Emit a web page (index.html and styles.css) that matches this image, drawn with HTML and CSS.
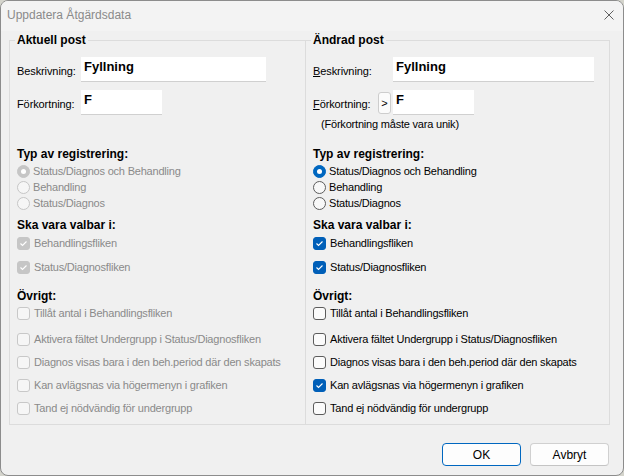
FILE: index.html
```html
<!DOCTYPE html>
<html lang="sv">
<head>
<meta charset="utf-8">
<title>Uppdatera Åtgärdsdata</title>
<link rel="stylesheet" href="styles.css">
</head>
<body>
<div class="window">
  <div class="titlebar">
    <span class="title">Uppdatera Åtgärdsdata</span>
    <span class="close"><svg width="10" height="10" viewBox="0 0 10 10"><path d="M0.5 0.5 L9.5 9.5 M9.5 0.5 L0.5 9.5" stroke="#5f5f5f" stroke-width="1" fill="none"/></svg></span>
  </div>
  <div class="content">
    <div class="groups">
      <fieldset class="group left">
        <legend>Aktuell post</legend>
        <div class="field f1"><span class="lbl lw-left">Beskrivning:</span><div class="input in-wide-left">Fyllning</div></div>
        <div class="field f2"><span class="lbl lw-left">Förkortning:</span><div class="input in-short">F</div></div>
        <div class="note"></div>
        <div class="heading hd1">Typ av registrering:</div>
        <div class="opt disabled o-first"><span class="radio checked"></span><span>Status/Diagnos och Behandling</span></div>
        <div class="opt disabled"><span class="radio"></span><span>Behandling</span></div>
        <div class="opt disabled"><span class="radio"></span><span>Status/Diagnos</span></div>
        <div class="heading hd2">Ska vara valbar i:</div>
        <div class="opt disabled c1"><span class="check checked"><svg viewBox="0 0 13 13"><path d="M3.5 6.5 L5.5 8.5 L9.5 4.5"/></svg></span><span>Behandlingsfliken</span></div>
        <div class="opt disabled c2"><span class="check checked"><svg viewBox="0 0 13 13"><path d="M3.5 6.5 L5.5 8.5 L9.5 4.5"/></svg></span><span>Status/Diagnosfliken</span></div>
        <div class="heading hd3">Övrigt:</div>
        <div class="opt disabled c3"><span class="check"></span><span>Tillåt antal i Behandlingsfliken</span></div>
        <div class="opt disabled c4"><span class="check"></span><span>Aktivera fältet Undergrupp i Status/Diagnosfliken</span></div>
        <div class="opt disabled c5"><span class="check"></span><span>Diagnos visas bara i den beh.period där den skapats</span></div>
        <div class="opt disabled c5"><span class="check"></span><span>Kan avlägsnas via högermenyn i grafiken</span></div>
        <div class="opt disabled c5"><span class="check"></span><span>Tand ej nödvändig för undergrupp</span></div>
      </fieldset>
      <fieldset class="group right">
        <legend>Ändrad post</legend>
        <div class="field f1"><span class="lbl lw-right1"><u>B</u>eskrivning:</span><div class="input in-wide-right">Fyllning</div></div>
        <div class="field f2"><span class="lbl lw-right2"><u>F</u>örkortning:</span><span class="mini-btn">&gt;</span><div class="input in-short">F</div></div>
        <div class="note">(Förkortning måste vara unik)</div>
        <div class="heading hd1">Typ av registrering:</div>
        <div class="opt o-first"><span class="radio checked"></span><span>Status/Diagnos och Behandling</span></div>
        <div class="opt"><span class="radio"></span><span>Behandling</span></div>
        <div class="opt"><span class="radio"></span><span>Status/Diagnos</span></div>
        <div class="heading hd2">Ska vara valbar i:</div>
        <div class="opt c1"><span class="check checked"><svg viewBox="0 0 13 13"><path d="M3.5 6.5 L5.5 8.5 L9.5 4.5"/></svg></span><span>Behandlingsfliken</span></div>
        <div class="opt c2"><span class="check checked"><svg viewBox="0 0 13 13"><path d="M3.5 6.5 L5.5 8.5 L9.5 4.5"/></svg></span><span>Status/Diagnosfliken</span></div>
        <div class="heading hd3">Övrigt:</div>
        <div class="opt c3"><span class="check"></span><span>Tillåt antal i Behandlingsfliken</span></div>
        <div class="opt c4"><span class="check"></span><span>Aktivera fältet Undergrupp i Status/Diagnosfliken</span></div>
        <div class="opt c5"><span class="check"></span><span>Diagnos visas bara i den beh.period där den skapats</span></div>
        <div class="opt c5"><span class="check checked"><svg viewBox="0 0 13 13"><path d="M3.5 6.5 L5.5 8.5 L9.5 4.5"/></svg></span><span>Kan avlägsnas via högermenyn i grafiken</span></div>
        <div class="opt c5"><span class="check"></span><span>Tand ej nödvändig för undergrupp</span></div>
      </fieldset>
    </div>
    <div class="buttons">
      <div class="btn default">OK</div>
      <div class="btn">Avbryt</div>
    </div>
  </div>
</div>
</body>
</html>
```

FILE: styles.css
```css
html, body {
  margin: 0;
  padding: 0;
  background: #d4d4cc;
}
body {
  font-family: "Liberation Sans", Arial, sans-serif;
  font-size: 11px;
  color: #000;
}
.window {
  width: 624px;
  height: 476px;
  box-sizing: border-box;
  border: 1px solid #8c8c8c;
  border-radius: 8px;
  background: #f0f0f0;
  overflow: hidden;
  display: flex;
  flex-direction: column;
}
.titlebar {
  height: 30px;
  flex: none;
  display: flex;
  align-items: center;
  justify-content: space-between;
  padding: 0 9px 0 6px;
  background: #f3f3f3;
}
.title {
  font-size: 12px;
  color: #8a8a8a;
  margin-top: -2px;
}
.close {
  display: flex;
  width: 10px;
  height: 10px;
  margin-top: -3px;
}
.content {
  flex: 1;
  display: flex;
  flex-direction: column;
  padding: 2px 13px 0 8px;
}
.groups {
  display: flex;
}
.group {
  margin: 0;
  border: 1px solid #dcdcdc;
  padding: 0 7px;
  height: 392px;
  box-sizing: border-box;
  min-width: 0;
}
.group.left {
  width: 297px;
}
.group.right {
  width: 305px;
  margin-left: -1px;
}
legend {
  padding: 0 2px;
  margin-left: -2px;
  font-weight: bold;
  font-size: 12px;
  line-height: 14px;
}
.field {
  display: flex;
  align-items: center;
  height: 25px;
}
.f1 { margin-top: 10px; }
.f2 { margin-top: 8px; }
.lbl {
  flex: none;
  padding-top: 3px;
  line-height: 16px;
  letter-spacing: -0.1px;
}
.lbl u { text-decoration: underline; }
.lw-left { width: 64px; }
.lw-right1 { width: 80px; }
.lw-right2 { width: 65px; }
.input {
  flex: none;
  height: 25px;
  box-sizing: border-box;
  background: #fff;
  border-bottom: 1px solid #d0d0d0;
  font-weight: bold;
  font-size: 13px;
  line-height: 16px;
  padding: 2px 3px;
}
.in-wide-left { width: 185px; }
.in-wide-right { width: 201px; }
.in-short { width: 81px; }
.mini-btn {
  flex: none;
  width: 13px;
  height: 22px;
  box-sizing: border-box;
  border: 1px solid #cdcdcd;
  border-radius: 3px;
  background: #fbfbfb;
  margin-right: 2px;
  display: flex;
  align-items: center;
  justify-content: center;
  font-size: 11px;
}
.note {
  height: 16px;
  line-height: 16px;
  margin-top: 1px;
  padding-left: 8px;
  letter-spacing: -0.2px;
}
.heading {
  font-weight: bold;
  font-size: 12px;
  line-height: 16px;
  height: 16px;
}
.hd1 { margin-top: 14px; }
.hd2 { margin-top: 6px; }
.hd3 { margin-top: 13px; }
.opt {
  display: flex;
  align-items: center;
  height: 16px;
  line-height: 16px;
  letter-spacing: -0.2px;
}
.o-first { margin-top: 1px; }
.c1 { margin-top: 2px; }
.c2 { margin-top: 8px; }
.c3 { margin-top: 1px; }
.c4 { margin-top: 10px; }
.c5 { margin-top: 7px; }
.opt.disabled { color: #8a8a8a; }

.radio {
  flex: none;
  width: 13px;
  height: 13px;
  box-sizing: border-box;
  border-radius: 50%;
  border: 1px solid #5c5c5c;
  background: #f8f8f8;
  margin-right: 3px;
  display: flex;
  align-items: center;
  justify-content: center;
}
.radio.checked {
  background: #0067c0;
  border-color: #0067c0;
}
.radio.checked::after {
  content: "";
  width: 5px;
  height: 5px;
  border-radius: 50%;
  background: #fff;
}
.disabled .radio {
  border-color: #c6c6c6;
  background: #f6f6f6;
}
.disabled .radio.checked {
  background: #c6c6c6;
  border-color: #c6c6c6;
}

.check {
  flex: none;
  width: 13px;
  height: 13px;
  box-sizing: border-box;
  border-radius: 3px;
  border: 1px solid #5c5c5c;
  background: #fbfbfb;
  margin-right: 4px;
  display: flex;
}
.check.checked {
  background: #005fb8;
  border-color: #005fb8;
}
.check svg {
  width: 13px;
  height: 13px;
  margin: -1px;
}
.check svg path {
  fill: none;
  stroke: #fff;
  stroke-width: 1.1;
}
.disabled .check {
  border-color: #c8c8c8;
  background: #f6f6f6;
}
.disabled .check.checked {
  background: #c6c6c6;
  border-color: #c6c6c6;
}

.buttons {
  display: flex;
  justify-content: flex-end;
  gap: 9px;
  margin-top: 18px;
  padding-right: 1px;
}
.btn {
  width: 79px;
  height: 23px;
  box-sizing: border-box;
  border: 1px solid #d0d0d0;
  border-bottom-color: #c4c4c4;
  border-radius: 4px;
  background: #fdfdfd;
  font-size: 12px;
  display: flex;
  align-items: center;
  justify-content: center;
}
.btn.default {
  border-color: #0067c0;
}
```
